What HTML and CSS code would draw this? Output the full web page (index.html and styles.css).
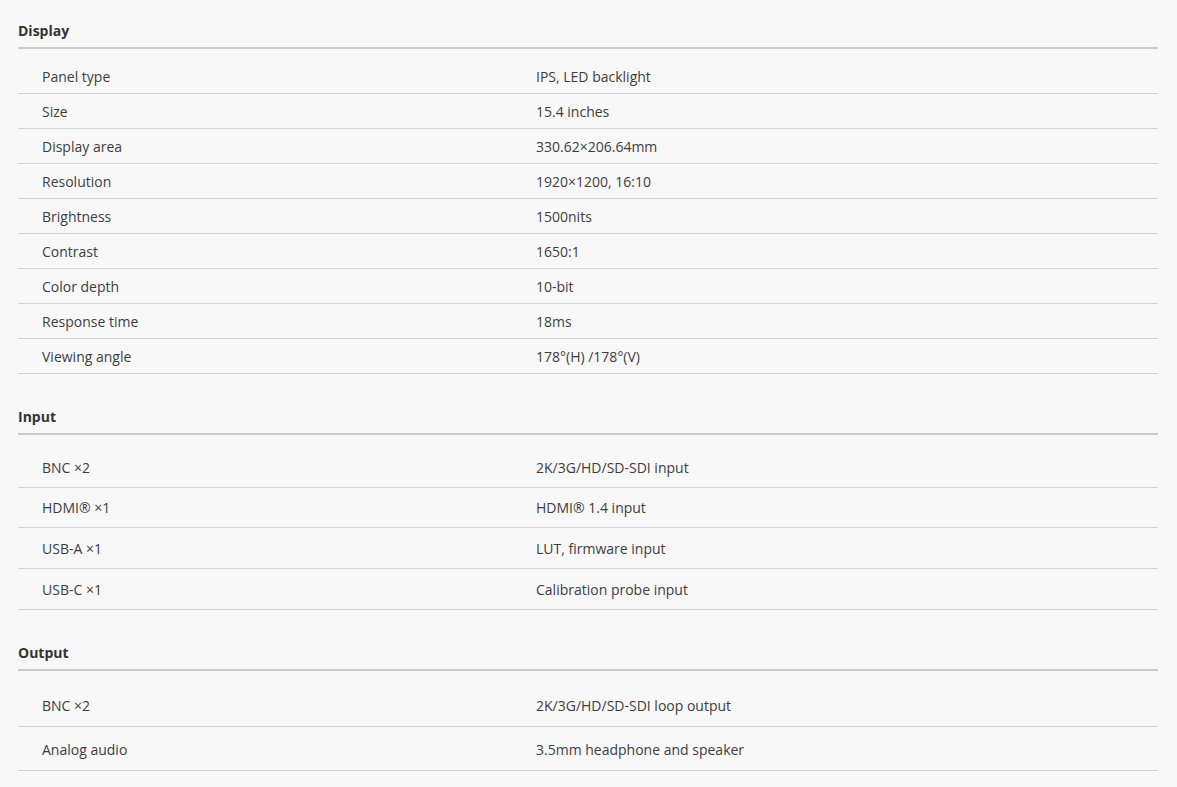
FILE: index.html
```html
<!DOCTYPE html>
<html lang="en">
<head>
<meta charset="utf-8">
<title>Specifications</title>
<link rel="stylesheet" href="styles.css">
</head>
<body>
<main class="specs">
  <section class="group group--display">
    <h2 class="group__title">Display</h2>
    <div class="group__rows">
      <div class="row"><div class="row__label">Panel type</div><div class="row__value">IPS, LED backlight</div></div>
      <div class="row"><div class="row__label">Size</div><div class="row__value">15.4 inches</div></div>
      <div class="row"><div class="row__label">Display area</div><div class="row__value">330.62×206.64mm</div></div>
      <div class="row"><div class="row__label">Resolution</div><div class="row__value">1920×1200, 16:10</div></div>
      <div class="row"><div class="row__label">Brightness</div><div class="row__value">1500nits</div></div>
      <div class="row"><div class="row__label">Contrast</div><div class="row__value">1650:1</div></div>
      <div class="row"><div class="row__label">Color depth</div><div class="row__value">10-bit</div></div>
      <div class="row"><div class="row__label">Response time</div><div class="row__value">18ms</div></div>
      <div class="row"><div class="row__label">Viewing angle</div><div class="row__value">178°(H) /178°(V)</div></div>
    </div>
  </section>
  <section class="group group--input">
    <h2 class="group__title">Input</h2>
    <div class="group__rows">
      <div class="row"><div class="row__label">BNC ×2</div><div class="row__value">2K/3G/HD/SD-SDI input</div></div>
      <div class="row"><div class="row__label">HDMI® ×1</div><div class="row__value">HDMI® 1.4 input</div></div>
      <div class="row"><div class="row__label">USB-A ×1</div><div class="row__value">LUT, firmware input</div></div>
      <div class="row"><div class="row__label">USB-C ×1</div><div class="row__value">Calibration probe input</div></div>
    </div>
  </section>
  <section class="group group--output">
    <h2 class="group__title">Output</h2>
    <div class="group__rows">
      <div class="row"><div class="row__label">BNC ×2</div><div class="row__value">2K/3G/HD/SD-SDI loop output</div></div>
      <div class="row"><div class="row__label">Analog audio</div><div class="row__value">3.5mm headphone and speaker</div></div>
    </div>
  </section>
</main>
</body>
</html>
```

FILE: styles.css
```css
html, body {
  margin: 0;
  padding: 0;
  background: #f8f8f8;
}

body {
  font-family: "Open Sans", "Noto Sans", sans-serif;
  color: #3d3d3d;
}

.specs {
  width: 1140px;
  padding: 0 19px 0 18px;
  display: flex;
  flex-direction: column;
  gap: 12px;
}

.group__title {
  margin: 0;
  padding: 21px 0 6px;
  font-size: 14px;
  line-height: 20px;
  font-weight: 700;
  color: #333;
  border-bottom: 2px solid #cacaca;
}

.group__rows {
  padding-top: 10px;
}

.group--input .group__rows,
.group--output .group__rows {
  padding-top: 12px;
}

.row {
  box-sizing: border-box;
  display: grid;
  grid-template-columns: 494px 1fr;
  align-items: center;
  height: 35px;
  padding: 2px 0 0 24px;
  border-bottom: 1px solid #d2d2d2;
  font-size: 14px;
  line-height: 20px;
}

.group--input .row {
  height: 40.67px;
}

.group--output .row {
  height: 44px;
  padding-top: 3px;
}
```
